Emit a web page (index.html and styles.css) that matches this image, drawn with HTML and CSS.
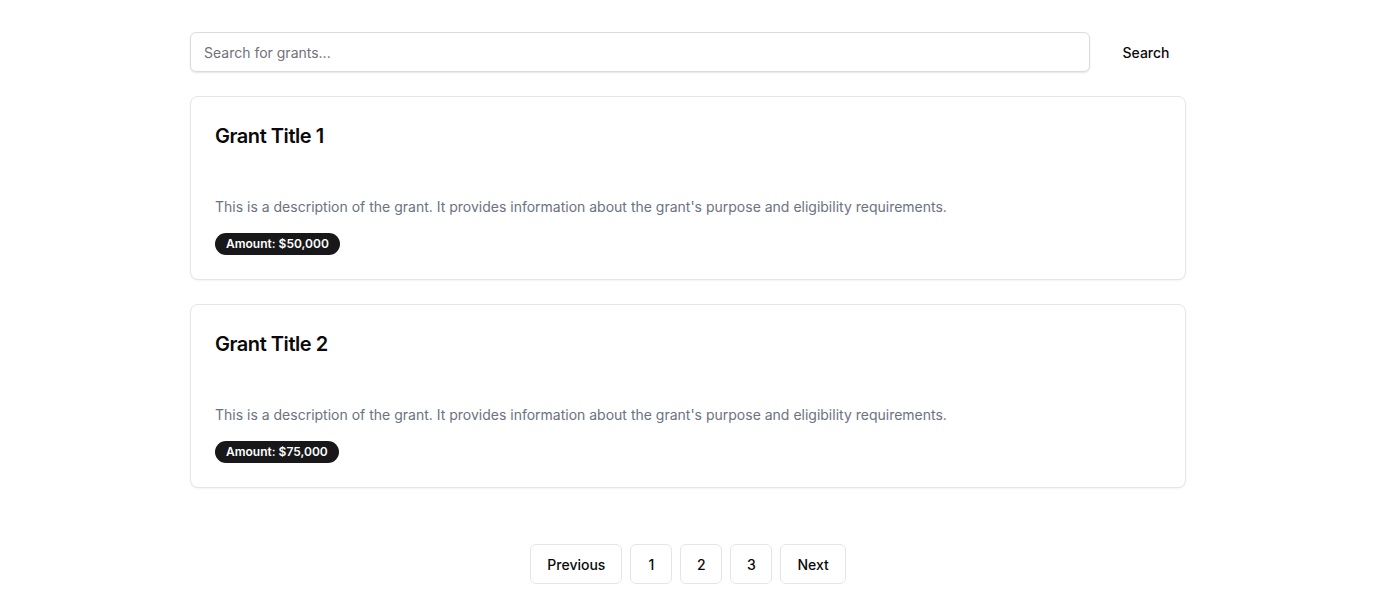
FILE: index.html
```html
<!DOCTYPE html>
<html lang="en">
<head>
<meta charset="utf-8">
<title>Grants</title>
<link rel="stylesheet" href="styles.css">
</head>
<body>
<main class="page">
  <form class="search-row">
    <input class="search-input" type="text" placeholder="Search for grants...">
    <button class="search-btn" type="button">Search</button>
  </form>
  <section class="grant-list">
    <article class="card">
      <div class="card-header">
        <h3 class="card-title">Grant Title 1</h3>
      </div>
      <div class="card-content">
        <p class="card-desc">This is a description of the grant. It provides information about the grant's purpose and eligibility requirements.</p>
        <span class="badge">Amount: $50,000</span>
      </div>
    </article>
    <article class="card">
      <div class="card-header">
        <h3 class="card-title">Grant Title 2</h3>
      </div>
      <div class="card-content">
        <p class="card-desc">This is a description of the grant. It provides information about the grant's purpose and eligibility requirements.</p>
        <span class="badge">Amount: $75,000</span>
      </div>
    </article>
  </section>
  <nav class="pagination">
    <button class="page-btn">Previous</button>
    <button class="page-btn num">1</button>
    <button class="page-btn num">2</button>
    <button class="page-btn num">3</button>
    <button class="page-btn">Next</button>
  </nav>
</main>
</body>
</html>
```
FILE: styles.css
```css
* { box-sizing: border-box; }
html, body { margin: 0; padding: 0; background: #ffffff; }
body {
  font-family: Inter, "Noto Sans", "Liberation Sans", sans-serif;
  color: #0a0a0a;
}
.page {
  width: 996px;
  margin: 0 auto;
  padding-top: 32px;
}
.search-row {
  display: flex;
  gap: 16px;
  align-items: center;
  margin: 0 0 24px;
}
.search-input {
  flex: 1;
  height: 40px;
  border: 1px solid #dcdce0;
  border-radius: 6px;
  padding: 0 13px;
  font: 14px Inter, sans-serif;
  color: #0a0a0a;
  box-shadow: 0 1px 2px rgba(0,0,0,0.1);
  outline: none;
}
.search-input::placeholder { color: #71717a; }
.search-btn {
  height: 40px;
  width: 80px;
  border: none;
  background: transparent;
  font: 500 14px Inter, sans-serif;
  color: #0a0a0a;
  padding: 0;
}
.grant-list {
  display: flex;
  flex-direction: column;
  gap: 24px;
}
.card {
  border: 1px solid #e5e5e8;
  border-radius: 8px;
  background: #fff;
  box-shadow: 0 1px 2px rgba(0,0,0,0.05);
}
.card-header {
  padding: 25px 24px 0;
  height: 100px;
}
.card-title {
  margin: 0;
  font-size: 20px;
  line-height: 28px;
  font-weight: 600;
  letter-spacing: -0.45px;
}
.card-content {
  padding: 0 24px 24px;
}
.card-desc {
  margin: 0 0 16px;
  font-size: 14px;
  line-height: 20px;
  color: #6b7280;
}
.badge {
  display: inline-block;
  vertical-align: top;
  height: 22px;
  background: #18181b;
  color: #fff;
  font-size: 12px;
  font-weight: 600;
  line-height: 22px;
  padding: 0 11px;
  border-radius: 999px;
}
.pagination {
  display: flex;
  justify-content: center;
  gap: 8px;
  margin-top: 56px;
}
.page-btn {
  height: 40px;
  border: 1px solid #e5e5e8;
  border-radius: 6px;
  background: #fff;
  padding: 0 16px;
  font: 500 14px Inter, sans-serif;
  color: #0a0a0a;
}
.page-btn.num { width: 42px; padding: 0; }
```
